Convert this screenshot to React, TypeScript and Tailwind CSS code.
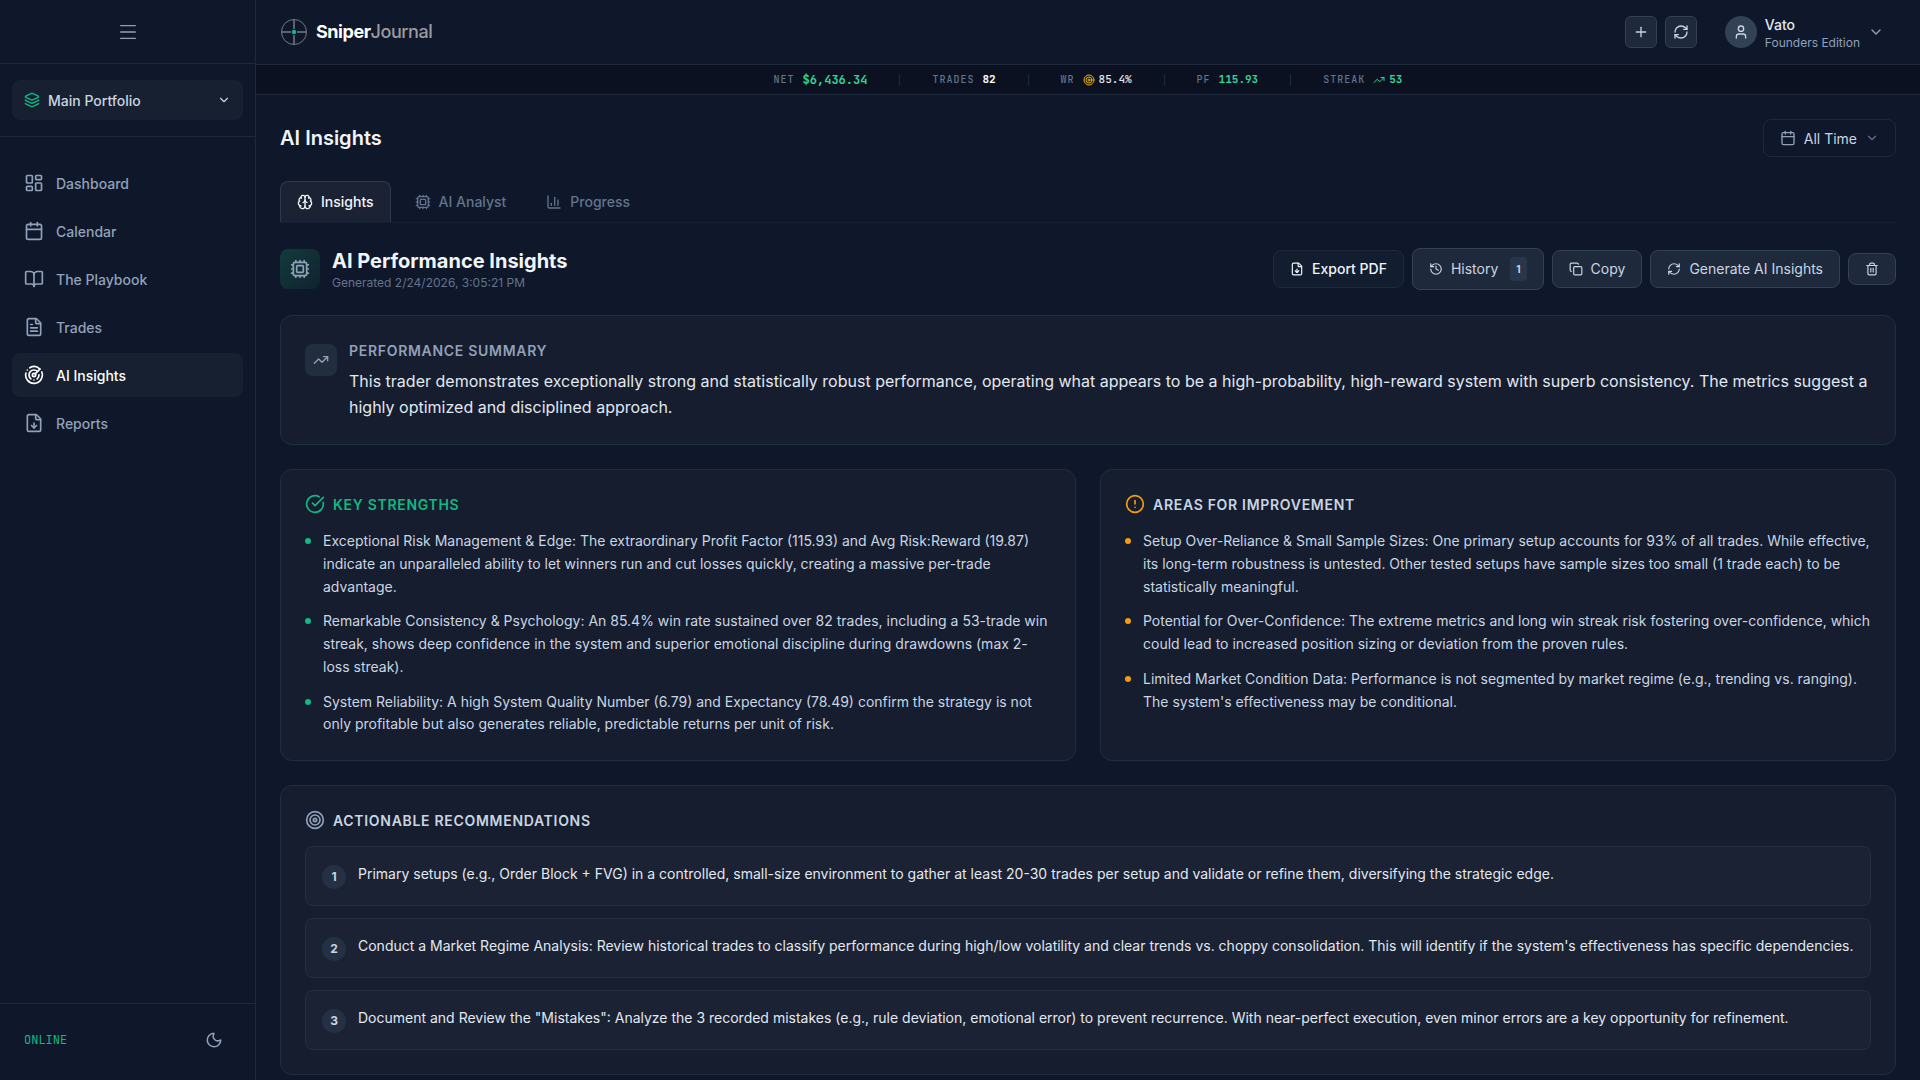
import type { ReactNode } from 'react';
import {
  AlertCircle, BookOpen, Brain, Calendar, ChartColumn, ChevronDown, CircleCheckBig, Copy, Cpu, FileDown,
  FileText, History, Layers, LayoutDashboard, Menu, Moon, Plus, Radar, RefreshCw, Target, Trash2, TrendingUp, User,
} from 'lucide-react';

const mono = "font-['JetBrains_Mono','Liberation_Mono',monospace]";

const navItems = [
  { label: 'Dashboard', icon: LayoutDashboard },
  { label: 'Calendar', icon: Calendar },
  { label: 'The Playbook', icon: BookOpen },
  { label: 'Trades', icon: FileText },
  { label: 'AI Insights', icon: Radar, active: true },
  { label: 'Reports', icon: FileDown },
];

const strengths = [
  'Exceptional Risk Management & Edge: The extraordinary Profit Factor (115.93) and Avg Risk:Reward (19.87) indicate an unparalleled ability to let winners run and cut losses quickly, creating a massive per-trade advantage.',
  'Remarkable Consistency & Psychology: An 85.4% win rate sustained over 82 trades, including a 53-trade win streak, shows deep confidence in the system and superior emotional discipline during drawdowns (max 2-loss streak).',
  'System Reliability: A high System Quality Number (6.79) and Expectancy (78.49) confirm the strategy is not only profitable but also generates reliable, predictable returns per unit of risk.',
];

const improvements = [
  'Setup Over-Reliance & Small Sample Sizes: One primary setup accounts for 93% of all trades. While effective, its long-term robustness is untested. Other tested setups have sample sizes too small (1 trade each) to be statistically meaningful.',
  'Potential for Over-Confidence: The extreme metrics and long win streak risk fostering over-confidence, which could lead to increased position sizing or deviation from the proven rules.',
  "Limited Market Condition Data: Performance is not segmented by market regime (e.g., trending vs. ranging). The system's effectiveness may be conditional.",
];

const recommendations = [
  'Primary setups (e.g., Order Block + FVG) in a controlled, small-size environment to gather at least 20-30 trades per setup and validate or refine them, diversifying the strategic edge.',
  "Conduct a Market Regime Analysis: Review historical trades to classify performance during high/low volatility and clear trends vs. choppy consolidation. This will identify if the system's effectiveness has specific dependencies.",
  'Document and Review the "Mistakes": Analyze the 3 recorded mistakes (e.g., rule deviation, emotional error) to prevent recurrence. With near-perfect execution, even minor errors are a key opportunity for refinement.',
];

function Sidebar() {
  return (
    <aside className="flex w-64 shrink-0 flex-col border-r border-[#1e293b]">
      <div className="flex h-16 items-center justify-center border-b border-[#1e293b]">
        <button aria-label="Toggle menu" className="text-slate-400">
          <Menu size={22} strokeWidth={1.5} />
        </button>
      </div>
      <div className="border-b border-[#1e293b] px-3 py-4">
        <button className="flex h-10 w-full items-center gap-2 rounded-lg bg-[#162031] px-3 text-sm leading-[21px] font-medium text-slate-300">
          <Layers size={16} className="text-[#10b981]" />
          Main Portfolio
          <ChevronDown size={14} className="ml-auto" />
        </button>
      </div>
      <nav className="flex flex-1 flex-col gap-1 px-3 pt-6">
        {navItems.map(({ label, icon: Icon, active }) => (
          <a
            key={label}
            href="#"
            className={`flex h-11 items-center gap-3 rounded-lg px-3 text-sm leading-[21px] font-medium ${active ? 'bg-[#162031] text-white' : 'text-slate-400'}`}
          >
            <Icon size={20} />
            {label}
          </a>
        ))}
      </nav>
      <div className="flex h-[77px] items-center justify-between border-t border-[#1e293b] px-6 pb-1">
        <span className={`${mono} text-xs text-[#10b981]`}>ONLINE</span>
        <button aria-label="Toggle theme" className="p-2 text-slate-400">
          <Moon size={18} />
        </button>
      </div>
    </aside>
  );
}

function Logo() {
  return (
    <svg width="28" height="28" viewBox="0 0 28 28" fill="none" aria-hidden="true">
      <circle cx="14" cy="14" r="12.5" stroke="#737984" />
      <path d="M14 2v9M14 17v9M2 14h9M17 14h9" stroke="#5b626f" strokeWidth="2" />
      <circle cx="14" cy="14" r="2.2" fill="#10b981" />
    </svg>
  );
}

function Header() {
  return (
    <header className="flex h-[65px] shrink-0 items-center justify-between border-b border-[#1e293b] px-6">
      <div className="flex items-center gap-2">
        <Logo />
        <span className="text-lg font-medium tracking-tight text-[#9b9b9f]">
          <b className="font-bold text-white">Sniper</b>Journal
        </span>
      </div>
      <div className="flex items-center">
        <button aria-label="Add trade" className="mr-2 flex size-8 items-center justify-center rounded-md border border-[#334155] bg-[#1e293b] text-slate-300">
          <Plus size={16} />
        </button>
        <button aria-label="Refresh" className="mr-4 flex size-8 items-center justify-center rounded-md border border-[#334155] bg-[#1e293b] text-slate-300">
          <RefreshCw size={16} />
        </button>
        <button className="flex items-center gap-2 px-3 text-left">
          <span className="flex size-8 items-center justify-center rounded-full bg-[#334155] text-slate-300">
            <User size={16} />
          </span>
          <span className="flex flex-col">
            <span className="text-sm leading-[21px] font-medium text-slate-200">Vato</span>
            <span className="text-xs text-slate-400">Founders Edition</span>
          </span>
          <ChevronDown size={16} className="text-slate-400" />
        </button>
      </div>
    </header>
  );
}

function Stat({ label, children }: { label: string; children: ReactNode }) {
  return (
    <div className="flex items-center gap-2">
      <span className="text-[10px] font-medium tracking-widest text-slate-500">{label}</span>
      {children}
    </div>
  );
}

function Ticker() {
  const bar = <span className="h-3 w-px bg-[#1e293b]" />;
  return (
    <div className={`${mono} flex h-[30px] shrink-0 items-center justify-center gap-8 border-b border-[#1e293b] bg-[#0b1120] text-[11px] font-bold text-[#34d399]`}>
      <Stat label="NET"><span className="text-xs">$6,436.34</span></Stat>
      {bar}
      <Stat label="TRADES"><span className="text-white">82</span></Stat>
      {bar}
      <Stat label="WR">
        <span className="flex items-center gap-1 font-medium text-slate-200">
          <Target size={12} className="text-[#eab308]" />
          85.4%
        </span>
      </Stat>
      {bar}
      <Stat label="PF"><span>115.93</span></Stat>
      {bar}
      <Stat label="STREAK">
        <span className="flex items-center gap-1"><TrendingUp size={12} />53</span>
      </Stat>
    </div>
  );
}

const actionButton = 'flex items-center gap-2 rounded-lg border px-4 py-2 text-sm';
const solid = 'border-[#334155] bg-[#1e293b] text-slate-300';

function Actions() {
  return (
    <div className="flex items-center gap-2">
      <button className={`${actionButton} border-[#1e293b] bg-[#131d30] font-medium text-slate-100`}>
        <FileDown size={14} />Export PDF
      </button>
      <button className={`${actionButton} ${solid}`}>
        <History size={14} />History
        <span className="ml-1 rounded bg-[#293548] px-1.5 py-1 text-[10px] leading-4 font-bold">1</span>
      </button>
      <button className={`${actionButton} ${solid}`}>
        <Copy size={14} />Copy
      </button>
      <button className={`${actionButton} ${solid}`}>
        <RefreshCw size={14} />Generate AI Insights
      </button>
      <button aria-label="Delete insights" className={`flex h-8 w-12 items-center justify-center rounded-lg border ${solid}`}>
        <Trash2 size={14} />
      </button>
    </div>
  );
}

const card = 'rounded-xl border border-[#212e40] bg-[#151d2f] p-6';

function CardTitle({ icon, className, children }: { icon: ReactNode; className: string; children: string }) {
  return (
    <h3 className={`mb-4 flex h-5 items-center gap-2 text-sm leading-[21px] font-semibold tracking-wider uppercase ${className}`}>
      {icon}
      {children}
    </h3>
  );
}

function BulletList({ items, dot }: { items: string[]; dot: string }) {
  return (
    <ul className="flex flex-col gap-3">
      {items.map((item) => (
        <li key={item} className="flex items-start gap-3 text-sm leading-relaxed text-slate-300">
          <span className={`mt-2 size-1.5 shrink-0 rounded-full ${dot}`} />
          {item}
        </li>
      ))}
    </ul>
  );
}

export default function App() {
  return (
    <div className="flex h-screen overflow-hidden bg-[#0f172a] font-[Inter,sans-serif] text-slate-200">
      <Sidebar />
      <div className="flex min-w-0 flex-1 flex-col">
        <Header />
        <Ticker />
        <main className="flex-1 overflow-hidden p-6">
          <div className="mb-6 flex items-center justify-between">
            <h1 className="text-xl font-semibold text-slate-100">AI Insights</h1>
            <button className="flex h-[38px] items-center gap-2 rounded-lg border border-[#1e293b] px-4 text-sm leading-[21px] text-slate-300">
              <Calendar size={16} className="text-slate-400" />
              All Time
              <ChevronDown size={14} className="text-slate-500" />
            </button>
          </div>

          <div className="mb-6 flex items-stretch gap-2 border-b border-[#172135] text-sm font-medium text-slate-500">
            <button className="flex items-center gap-2 rounded-t-lg border border-b-0 border-[#2c3a4e] bg-[#1a2233] px-4 py-2.5 text-slate-100">
              <Brain size={16} />Insights
            </button>
            <button className="flex items-center gap-2 px-4">
              <Cpu size={16} />AI Analyst
            </button>
            <button className="flex items-center gap-2 px-4">
              <ChartColumn size={16} />Progress
            </button>
          </div>

          <div className="mb-6 flex items-center justify-between">
            <div className="flex items-center gap-3">
              <div className="flex size-10 items-center justify-center rounded-lg bg-linear-to-br from-[#113b3b] to-[#10232f] text-slate-400">
                <Cpu size={20} />
              </div>
              <div>
                <h2 className="text-xl leading-7 font-bold text-slate-100">AI Performance Insights</h2>
                <p className="text-xs text-slate-500">Generated 2/24/2026, 3:05:21 PM</p>
              </div>
            </div>
            <Actions />
          </div>

          <div className="flex flex-col gap-6">
            <section className={`${card} flex items-start gap-3`}>
              <div className="mt-1 flex size-8 shrink-0 items-center justify-center rounded-lg bg-[#222e40] text-slate-400">
                <TrendingUp size={16} />
              </div>
              <div>
                <h3 className="mb-2 flex h-5 items-center text-sm leading-[21px] font-semibold tracking-wider text-slate-400 uppercase">Performance Summary</h3>
                <p className="text-base leading-relaxed text-slate-200">
                  This trader demonstrates exceptionally strong and statistically robust performance, operating what appears to be a high-probability, high-reward system with superb consistency. The metrics suggest a highly optimized and disciplined approach.
                </p>
              </div>
            </section>

            <div className="grid grid-cols-2 gap-6">
              <section className={card}>
                <CardTitle icon={<CircleCheckBig size={20} />} className="text-[#10b981]">Key Strengths</CardTitle>
                <BulletList items={strengths} dot="bg-[#10b981]" />
              </section>
              <section className={card}>
                <CardTitle icon={<AlertCircle size={20} className="text-[#f59e0b]" />} className="text-slate-300">Areas for Improvement</CardTitle>
                <BulletList items={improvements} dot="bg-[#f59e0b]" />
              </section>
            </div>

            <section className={card}>
              <CardTitle icon={<Target size={20} className="text-slate-400" />} className="text-slate-300">Actionable Recommendations</CardTitle>
              <ol className="flex flex-col gap-3">
                {recommendations.map((item, i) => (
                  <li key={item} className="flex items-start gap-3 rounded-lg border border-[#243042] bg-[#1a2233] p-4 text-sm leading-relaxed text-slate-200">
                    <span className="mt-0.5 flex size-6 shrink-0 items-center justify-center rounded-full bg-[#243144] text-xs font-bold text-slate-300">
                      {i + 1}
                    </span>
                    {item}
                  </li>
                ))}
              </ol>
            </section>
          </div>
        </main>
      </div>
    </div>
  );
}
